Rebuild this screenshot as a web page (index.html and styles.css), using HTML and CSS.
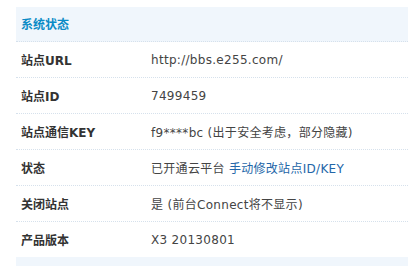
FILE: index.html
```html
<!DOCTYPE html>
<html>
<head>
<meta charset="utf-8">
<link rel="stylesheet" href="styles.css">
</head>
<body>
<div class="panel">
  <div class="head">系统状态</div>
  <div class="row"><div class="label">站点URL</div><div class="value">http://bbs.e255.com/</div></div>
  <div class="row"><div class="label">站点ID</div><div class="value">7499459</div></div>
  <div class="row"><div class="label">站点通信KEY</div><div class="value">f9****bc (出于安全考虑，部分隐藏)</div></div>
  <div class="row"><div class="label">状态</div><div class="value">已开通云平台 <a class="link" href="#">手动修改站点ID/KEY</a></div></div>
  <div class="row"><div class="label">关闭站点</div><div class="value">是 (前台Connect将不显示)</div></div>
  <div class="row last"><div class="label">产品版本</div><div class="value">X3 20130801</div></div>
  <div class="foot"></div>
</div>
</body>
</html>
```
FILE: styles.css
```css
html, body {
  margin: 0;
  padding: 0;
  background: #fff;
}
body {
  font-family: "DejaVu Sans", "Noto Sans CJK SC", sans-serif;
  font-size: 12px;
  color: #444;
  overflow: hidden;
}
.panel {
  padding: 7px 0 0 16px;
}
.head {
  height: 34px;
  line-height: 34px;
  padding-left: 5px;
  background: #f0f6fc;
  color: #0a8bc6;
  font-weight: bold;
  font-family: "Noto Sans CJK SC", sans-serif;
  border-bottom: 1px dotted #d6e1ec;
}
.row {
  display: flex;
  height: 35px;
  align-items: center;
  border-bottom: 1px dotted #d6e1ec;
}
.row.last {
  border-bottom: none;
}
.label {
  width: 130px;
  padding-left: 5px;
  flex: none;
  font-weight: bold;
  color: #333;
}
.value {
  color: #444;
  letter-spacing: 0.3px;
}
.link {
  color: #2366a8;
  text-decoration: none;
}
.foot {
  height: 12px;
  background: #f0f6fc;
}
```
